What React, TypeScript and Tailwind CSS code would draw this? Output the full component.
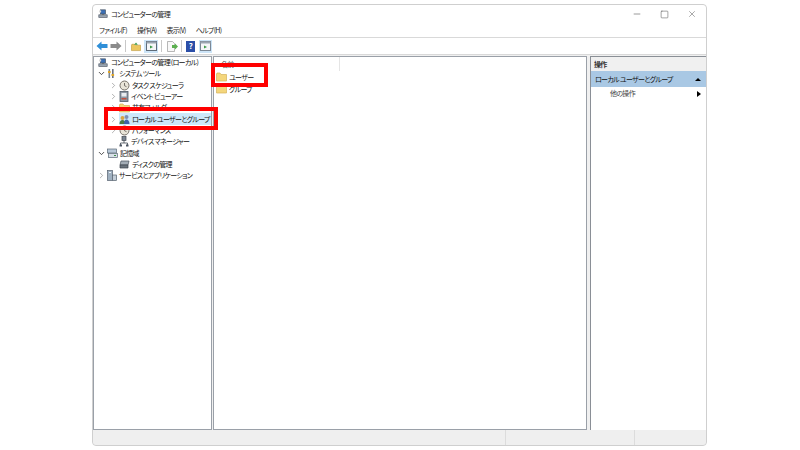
import { ChevronDown, ChevronRight, Minus, Square, X } from 'lucide-react';
import type { ReactNode } from 'react';

function MmcIcon({ size = 10 }: { size?: number }) {
  return (
    <svg width={size} height={size} viewBox="0 0 12 12" className="shrink-0">
      <rect x="3" y="1" width="6" height="5" fill="#3b6fb5" stroke="#44505f" strokeWidth="0.8" />
      <rect x="1" y="7" width="10" height="3" fill="#9aa5b1" stroke="#4b5563" strokeWidth="0.8" />
      <path d="M6 6v1" stroke="#333" />
      <circle cx="2.5" cy="3" r="1.4" fill="#d9d9d9" />
    </svg>
  );
}

function FolderIcon() {
  return (
    <svg width="11" height="10" viewBox="0 0 11 10" className="shrink-0">
      <path d="M0.5 2V9H10.5V2.5H5L4 1H1Z" fill="#f4d67c" stroke="#d5b25a" strokeWidth="0.7" />
    </svg>
  );
}

function ToolsIcon() {
  return (
    <svg width="10" height="11" viewBox="0 0 10 11" className="shrink-0">
      <rect x="1.5" y="1" width="1.6" height="9" fill="#7b8794" />
      <rect x="5" y="1" width="1.6" height="9" fill="#6b7280" />
      <rect x="1" y="3" width="2.6" height="2" fill="#e0a526" />
      <rect x="4.5" y="6" width="2.6" height="2" fill="#e0a526" />
    </svg>
  );
}

function ClockIcon() {
  return (
    <svg width="11" height="11" viewBox="0 0 11 11" className="shrink-0">
      <circle cx="5.5" cy="5.5" r="4.5" fill="#e8e4d8" stroke="#77726a" />
      <path d="M5.5 3v2.7l2 1" fill="none" stroke="#55514b" strokeWidth="0.8" />
    </svg>
  );
}

function LogIcon() {
  return (
    <svg width="10" height="11" viewBox="0 0 10 11" className="shrink-0">
      <rect x="1" y="0.5" width="8" height="10" fill="#8d97a3" stroke="#4f5a66" strokeWidth="0.8" />
      <rect x="2.5" y="2" width="5" height="3.5" fill="#e9edf1" />
      <rect x="2.5" y="7" width="5" height="1.5" fill="#c2513f" />
    </svg>
  );
}

function UsersIcon() {
  return (
    <svg width="11" height="11" viewBox="0 0 11 11" className="shrink-0">
      <circle cx="3.5" cy="4" r="2" fill="#d9a441" />
      <circle cx="7.5" cy="3" r="2" fill="#7f8fb0" />
      <path d="M0.5 10c0-3 1.5-4 3-4s3 1 3 4Z" fill="#4a7a45" />
      <path d="M5 10c0-3 1-4.500 2.500-4.500S10.500 7 10.500 10Z" fill="#3f62a8" />
    </svg>
  );
}

function DeviceIcon() {
  return (
    <svg width="10" height="11" viewBox="0 0 10 11" className="shrink-0">
      <rect x="3" y="0.500" width="4" height="4" fill="#7a8591" stroke="#3f4751" strokeWidth="0.7" />
      <path d="M5 4.500V7M1.500 9V7h7v2" fill="none" stroke="#3f4751" strokeWidth="0.8" />
      <rect x="0.500" y="8.500" width="2.500" height="2" fill="#4b5563" />
      <rect x="7" y="8.500" width="2.500" height="2" fill="#4b5563" />
    </svg>
  );
}

function StorageIcon() {
  return (
    <svg width="11" height="10" viewBox="0 0 11 10" className="shrink-0">
      <rect x="0.500" y="1" width="9" height="4" fill="#b8c8d8" stroke="#5b6875" strokeWidth="0.7" />
      <rect x="1.500" y="5.500" width="9" height="4" fill="#d8e0e8" stroke="#5b6875" strokeWidth="0.7" />
      <rect x="7" y="7" width="2" height="1" fill="#3c8f4a" />
    </svg>
  );
}

function DiskIcon() {
  return (
    <svg width="11" height="9" viewBox="0 0 11 9" className="shrink-0">
      <path d="M2 1h8L9 5H1Z" fill="#a4adb6" stroke="#49525b" strokeWidth="0.7" />
      <path d="M1 5h8v3H1Z" fill="#6b747d" stroke="#3c444c" strokeWidth="0.7" />
    </svg>
  );
}

function ServicesIcon() {
  return (
    <svg width="10" height="11" viewBox="0 0 10 11" className="shrink-0">
      <rect x="0.500" y="0.500" width="5" height="10" fill="#9fb0c0" stroke="#56626e" strokeWidth="0.7" />
      <rect x="5.500" y="5" width="4" height="5.500" fill="#c4ced8" stroke="#56626e" strokeWidth="0.7" />
      <rect x="2" y="2" width="2" height="1" fill="#f1f5f9" />
    </svg>
  );
}

function TreeRow({ indent, arrow, icon, label, selected }: { indent: string; arrow?: 'open' | 'closed'; icon: ReactNode; label: string; selected?: boolean }) {
  return (
    <div className={`flex h-[11.3px] items-center ${indent}`}>
      <span className="flex w-[11px] shrink-0 items-center justify-center">
        {arrow === 'open' && <ChevronDown size={9} strokeWidth={2.5} className="text-[#444]" />}
        {arrow === 'closed' && <ChevronRight size={9} strokeWidth={1.5} className="text-[#777]" />}
      </span>
      <span className={`flex h-[11.3px] flex-1 items-center gap-[2px] ${selected ? 'bg-[#cde8fa]' : ''}`}>
        {icon}
        <span className="whitespace-nowrap">{label}</span>
      </span>
    </div>
  );
}

function ToolButton({ active, children, wide }: { active?: boolean; children: ReactNode; wide?: boolean }) {
  return (
    <span className={`flex h-[13px] items-center justify-center ${wide ? 'w-[14px]' : 'w-[13px]'} ${active ? 'bg-[#cce4f7]' : ''}`}>
      {children}
    </span>
  );
}

function PaneIcon({ muted }: { muted?: boolean }) {
  return (
    <svg width="11" height="10" viewBox="0 0 11 10">
      <rect x="0.500" y="0.500" width="10" height="9" fill="#f4f6f8" stroke={muted ? '#7b8794' : '#5f6b78'} />
      <rect x="0.500" y="0.500" width="10" height="2" fill="#9aa5b1" />
      <path d="M4 4.500l3 1.500-3 1.500Z" fill="#3c9a4a" />
    </svg>
  );
}

export default function App() {
  return (
    <div className="flex h-[450px] w-[800px] items-start justify-center bg-white pt-[4px] pr-[1px] font-['Noto_Sans_CJK_JP','Liberation_Sans',sans-serif] text-[7px] leading-none tracking-[-0.7px] text-[#111] [font-feature-settings:'palt']">
      <div className="relative flex h-[442px] w-[615px] flex-col rounded-[4px] border border-[#cfcfcf] bg-[#f0f0f0]">
        <div className="flex h-[18px] shrink-0 items-center justify-between rounded-t-[4px] bg-white pl-[5px]">
          <div className="flex items-center gap-[3px] text-[#222]">
            <MmcIcon />
            <span>コンピューターの管理</span>
          </div>
          <div className="mr-[9px] flex items-center gap-[18px] text-[#444]">
            <Minus size={10} strokeWidth={1.3} />
            <Square size={9} strokeWidth={1.3} />
            <X size={10} strokeWidth={1.1} />
          </div>
        </div>
        <div className="flex h-[15px] shrink-0 items-center gap-[10px] border-b border-[#d9d9d9] bg-white pl-[6px] text-[#222]">
          <span>ファイル(F)</span>
          <span>操作(A)</span>
          <span>表示(V)</span>
          <span>ヘルプ(H)</span>
        </div>
        <div className="flex h-[17px] shrink-0 items-center gap-[2px] border-b border-[#d9d9d9] bg-white pl-[3px]">
          <svg width="12" height="10" viewBox="0 0 12 10"><path d="M0.500 5L5.500 0.500V3H11.500V7H5.500V9.500Z" fill="#2f8fd8" /></svg>
          <svg width="12" height="10" viewBox="0 0 12 10"><path d="M11.500 5L6.500 0.500V3H0.500V7H6.500V9.500Z" fill="#8b8b8b" /></svg>
          <span className="mx-[1px] h-[12px] w-px bg-[#c8c8c8]" />
          <ToolButton>
            <svg width="10" height="11" viewBox="0 0 11 11"><path d="M0.500 4V10H10.500V4H5L4 3H1Z" fill="#ecc760" stroke="#b6912e" strokeWidth="0.6" /><path d="M5.500 1l2 2.500h-4Z" fill="#3c9a4a" /></svg>
          </ToolButton>
          <ToolButton active wide><PaneIcon /></ToolButton>
          <span className="mx-[1px] h-[12px] w-px bg-[#c8c8c8]" />
          <ToolButton wide>
            <svg width="12" height="11" viewBox="0 0 12 11"><path d="M1.500 0.500H6.500L8.500 2.500V10.500H1.500Z" fill="#f8f8f8" stroke="#9a9a9a" strokeWidth="0.7" /><path d="M6 4h3V2.500L12 5.500 9 8.500V7H6Z" fill="#5bb04f" /></svg>
          </ToolButton>
          <span className="h-[12px] w-px bg-[#c8c8c8]" />
          <ToolButton>
            <span className="flex h-[11px] w-[9px] items-center justify-center bg-[#2b4fa8] text-[8px] font-bold text-white">?</span>
          </ToolButton>
          <ToolButton active><PaneIcon muted /></ToolButton>
        </div>

        <div className="flex min-h-0 flex-1 gap-[1px] pt-[1px]">
          <div className="w-[119px] shrink-0 border border-[#9aa0a8] bg-white">
            <div className="flex h-[11.3px] items-center gap-[3px] pl-[4px]">
              <MmcIcon />
              <span className="whitespace-nowrap">コンピューターの管理 (ローカル)</span>
            </div>
            <TreeRow indent="pl-[2px]" arrow="open" icon={<ToolsIcon />} label="システム ツール" />
            <TreeRow indent="pl-[14px]" arrow="closed" icon={<ClockIcon />} label="タスク スケジューラ" />
            <TreeRow indent="pl-[14px]" arrow="closed" icon={<LogIcon />} label="イベント ビューアー" />
            <TreeRow indent="pl-[14px]" arrow="closed" icon={<FolderIcon />} label="共有フォルダー" />
            <TreeRow indent="pl-[14px]" arrow="closed" icon={<UsersIcon />} label="ローカル ユーザーとグループ" selected />
            <TreeRow indent="pl-[14px]" arrow="closed" icon={<ClockIcon />} label="パフォーマンス" />
            <TreeRow indent="pl-[14px]" icon={<DeviceIcon />} label="デバイス マネージャー" />
            <TreeRow indent="pl-[2px]" arrow="open" icon={<StorageIcon />} label="記憶域" />
            <TreeRow indent="pl-[14px]" icon={<DiskIcon />} label="ディスクの管理" />
            <TreeRow indent="pl-[2px]" arrow="closed" icon={<ServicesIcon />} label="サービスとアプリケーション" />
          </div>

          <div className="w-[374px] shrink-0 border border-[#9aa0a8] bg-white">
            <div className="flex h-[14px] items-center">
              <span className="flex h-full w-[126px] items-center border-r border-[#e5e5e5] pl-[7px] text-[#555]">名前</span>
            </div>
            <div className="flex h-[12px] items-center gap-[2px] pl-[2px]">
              <FolderIcon />
              <span>ユーザー</span>
            </div>
            <div className="flex h-[12px] items-center gap-[2px] pl-[2px]">
              <FolderIcon />
              <span>グループ</span>
            </div>
          </div>

          <div className="ml-[2px] min-w-0 flex-1 border-l border-t border-[#8a8f96] bg-white">
            <div className="flex h-[14px] items-center bg-[#f0f0f0] pl-[3px] font-bold text-[#333]">操作</div>
            <div className="flex h-[16px] items-center justify-between bg-[#a9c8e4] pl-[4px] pr-[5px]">
              <span className="whitespace-nowrap">ローカル ユーザーとグループ</span>
              <span className="h-0 w-0 border-x-[3px] border-b-[3px] border-x-transparent border-b-black" />
            </div>
            <div className="flex h-[13px] items-center justify-between pl-[19px] pr-[5px] text-[#444]">
              <span>他の操作</span>
              <span className="h-0 w-0 border-y-[3.500px] border-l-[4px] border-y-transparent border-l-black" />
            </div>
          </div>
        </div>

        <div className="flex h-[15px] shrink-0 rounded-b-[4px] bg-[#efefef]">
          <span className="flex-1" />
          <span className="w-[129px] border-l border-[#dcdcdc]" />
          <span className="w-[72px] border-l border-[#dcdcdc]" />
        </div>

        {/* red callouts drawn over the shot */}
        <div className="absolute left-[11px] top-[102px] h-[23px] w-[114px] border-[4px] border-[#ff0000]" />
        <div className="absolute left-[118px] top-[58px] h-[24px] w-[57px] border-[4px] border-[#ff0000]" />
      </div>
    </div>
  );
}
